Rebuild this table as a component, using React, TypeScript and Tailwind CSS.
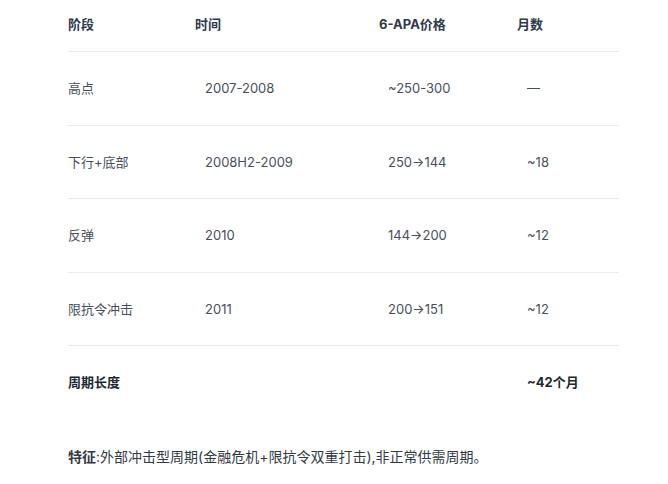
const rows = [
  { stage: "高点", time: "2007-2008", price: "~250-300", months: "—" },
  { stage: "下行+底部", time: "2008H2-2009", price: "250→144", months: "~18" },
  { stage: "反弹", time: "2010", price: "144→200", months: "~12" },
  { stage: "限抗令冲击", time: "2011", price: "200→151", months: "~12" },
];

const font = "font-['Inter','Noto_Sans_CJK_SC',sans-serif]";

export default function App() {
  return (
    <div className={`min-h-[484px] w-[668px] bg-white pl-[68px] ${font}`}>
      <div className="w-[551px]">
        <div className="grid h-[52px] grid-cols-[127px_184px_138px_102px] items-center border-b border-[#e8eaee] pb-[1px] text-[13px] font-bold text-[#2f3a4b]">
          <div>阶段</div>
          <div>时间</div>
          <div>6-APA价格</div>
          <div>月数</div>
        </div>
        {rows.map((r, i) => (
          <div
            key={i}
            className="grid h-[73.5px] grid-cols-[127px_184px_138px_102px] items-center border-b border-[#e8eaee] pt-[1px] text-[13px] text-[#474f5c]"
          >
            <div>{r.stage}</div>
            <div className="pl-[10px]">{r.time}</div>
            <div className="pl-[9px]">{r.price}</div>
            <div className="pl-[10px]">{r.months}</div>
          </div>
        ))}
        <div className="grid h-[73px] grid-cols-[127px_184px_138px_102px] items-center pt-[1px] text-[13px] font-bold text-[#222831]">
          <div>周期长度</div>
          <div />
          <div />
          <div className="pl-[10px]">~42个月</div>
        </div>
      </div>
      <p className="mt-[27px] text-[14px] text-[#333a44]">
        <span className="font-bold">特征</span>:外部冲击型周期(金融危机+限抗令双重打击),非正常供需周期。
      </p>
    </div>
  );
}
